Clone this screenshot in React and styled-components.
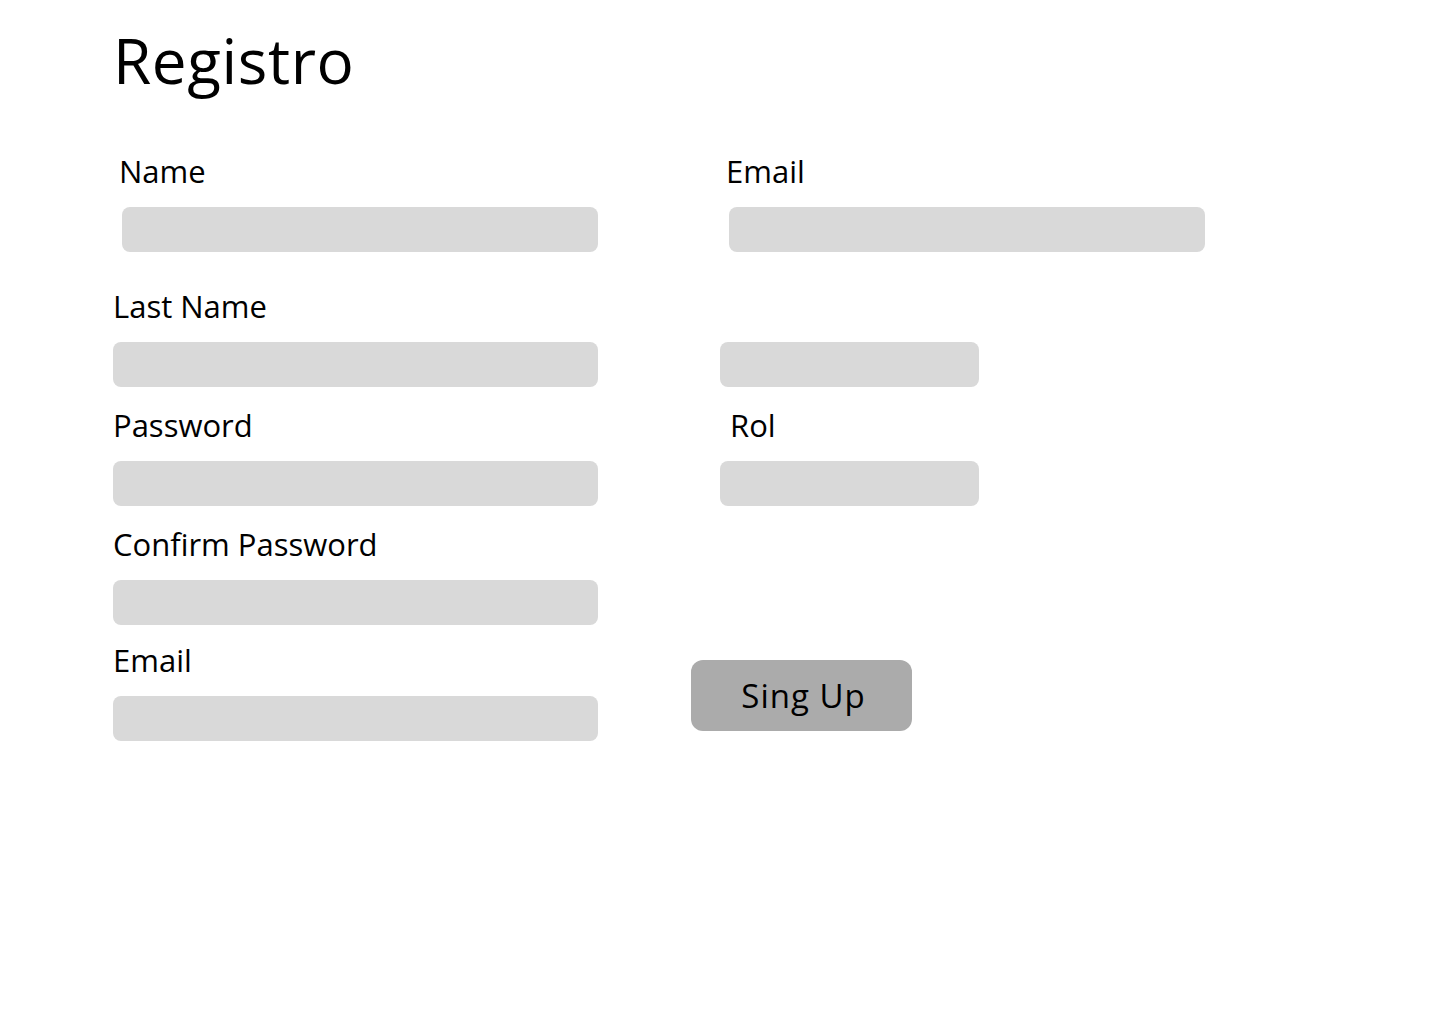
import React from "react";
import styled, { createGlobalStyle } from "styled-components";

const Global = createGlobalStyle`
  html, body { margin: 0; padding: 0; background: #ffffff; }
  body { font-family: "Open Sans", "Noto Sans", sans-serif; color: #000; }
  * { box-sizing: border-box; }
`;

const Page = styled.main`
  width: 1440px;
  min-height: 1024px;
  padding: 24px 0 0 113px;
`;

const Title = styled.h1`
  margin: 0 0 0 0;
  font-family: "Open Sans", "Noto Sans", sans-serif;
  font-weight: 400;
  font-size: 62px;
  line-height: 72px;
  letter-spacing: 0.6px;
`;

const Form = styled.form`
  display: flex;
  flex-direction: column;
  margin-top: 58px;
`;

const Row = styled.div`
  display: grid;
  grid-template-columns: 485px 1fr;
  column-gap: 122px;
  align-items: end;
  margin-top: ${(p) => p.$top || 0}px;
`;

const Field = styled.div`
  display: flex;
  flex-direction: column;
  align-items: flex-start;
`;

const Label = styled.label`
  display: block;
  font-size: 31px;
  line-height: 34px;
  font-weight: 400;
  margin-left: ${(p) => p.$shift || 0}px;
`;

const Input = styled.input`
  display: block;
  margin: ${(p) => (p.$noLabel ? 0 : 19)}px 0 0 ${(p) => p.$shift || 0}px;
  width: ${(p) => p.$w || 485}px;
  height: 45px;
  border: none;
  border-radius: 8px;
  background: #d9d9d9;
  outline: none;
  font-size: 18px;
  padding: 0 12px;
`;

const Button = styled.button`
  align-self: center;
  justify-self: start;
  margin-left: -29px;
  margin-top: 6px;
  width: 221px;
  height: 71px;
  padding: 0 0 0 4px;
  border: none;
  border-radius: 12px;
  background: #ababab;
  color: #000;
  font-family: "Open Sans", "Noto Sans", sans-serif;
  font-size: 33px;
  font-weight: 400;
  letter-spacing: 1px;
  cursor: pointer;
`;

export default function App() {
  return (
    <>
      <Global />
      <Page>
        <Title>Registro</Title>
        <Form onSubmit={(e) => e.preventDefault()}>
          <Row>
            <Field>
              <Label $shift={6}>Name</Label>
              <Input $shift={9} $w={476} />
            </Field>
            <Field>
              <Label $shift={6}>Email</Label>
              <Input $shift={9} $w={476} />
            </Field>
          </Row>
          <Row $top={37}>
            <Field>
              <Label>Last Name</Label>
              <Input />
            </Field>
            <Field>
              <Input $noLabel $w={259} />
            </Field>
          </Row>
          <Row $top={21}>
            <Field>
              <Label>Password</Label>
              <Input />
            </Field>
            <Field>
              <Label $shift={10}>Rol</Label>
              <Input $w={259} />
            </Field>
          </Row>
          <Row $top={21}>
            <Field>
              <Label>Confirm Password</Label>
              <Input />
            </Field>
            <div />
          </Row>
          <Row $top={18}>
            <Field>
              <Label>Email</Label>
              <Input />
            </Field>
            <Button type="button">Sing Up</Button>
          </Row>
        </Form>
      </Page>
    </>
  );
}
